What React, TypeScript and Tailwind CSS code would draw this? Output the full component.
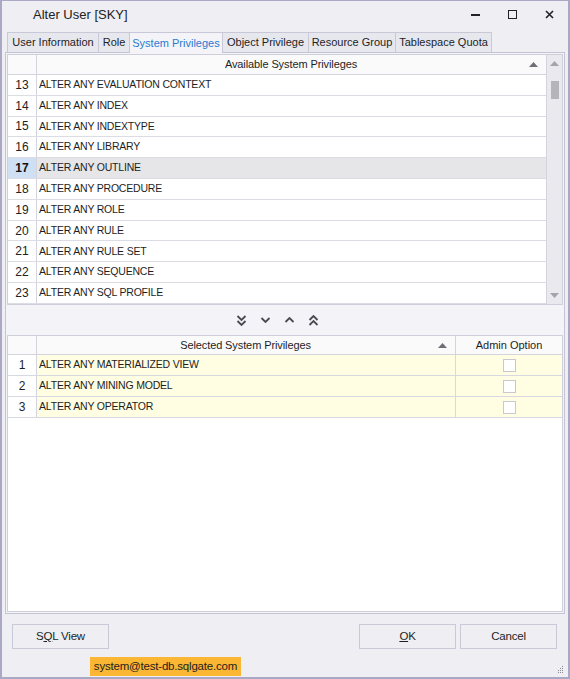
import type { ReactNode } from 'react'

const available = [
  'ALTER ANY EVALUATION CONTEXT',
  'ALTER ANY INDEX',
  'ALTER ANY INDEXTYPE',
  'ALTER ANY LIBRARY',
  'ALTER ANY OUTLINE',
  'ALTER ANY PROCEDURE',
  'ALTER ANY ROLE',
  'ALTER ANY RULE',
  'ALTER ANY RULE SET',
  'ALTER ANY SEQUENCE',
  'ALTER ANY SQL PROFILE',
]

const selected = ['ALTER ANY MATERIALIZED VIEW', 'ALTER ANY MINING MODEL', 'ALTER ANY OPERATOR']

const tabs = [
  { label: 'User Information', w: 'w-[92px]' },
  { label: 'Role', w: 'w-[32px]' },
  { label: 'System Privileges', w: 'w-[94px]', active: true },
  { label: 'Object Privilege', w: 'w-[87px]' },
  { label: 'Resource Group', w: 'w-[88px]' },
  { label: 'Tablespace Quota', w: 'w-[97px]' },
]

function SortUp() {
  return (
    <svg width="9" height="5" viewBox="0 0 9 5" className="shrink-0">
      <path d="M0 5 L4.5 0 L9 5 Z" fill="#6e6e76" />
    </svg>
  )
}

function Chevron({ up, double }: { up?: boolean; double?: boolean }) {
  const h = double ? 11 : 6
  return (
    <svg width="11" height={h} viewBox={`0 0 11 ${h}`} className={up ? 'rotate-180' : ''}>
      <path d="M1.5 1 L5.5 5 L9.5 1" fill="none" stroke="#4a4a52" strokeWidth="1.8" />
      {double && <path d="M1.5 6 L5.5 10 L9.5 6" fill="none" stroke="#4a4a52" strokeWidth="1.8" />}
    </svg>
  )
}

function Button({ children }: { children: ReactNode }) {
  return (
    <div className="flex h-[25px] w-[97px] items-center justify-center border border-[#c9c9d8] bg-[#eeeef3] text-[11.5px] tracking-[-0.2px] text-[#1e1e1e]">
      {children}
    </div>
  )
}

export default function App() {
  return (
    <div className="flex h-[679px] w-[570px] flex-col border-2 border-t border-[#a9a9c6] bg-[#eeeef3] font-[family-name:'Liberation_Sans',Arial,sans-serif] text-[11px] text-[#1e1e1e]">
      {/* title bar */}
      <div className="flex h-[31px] items-center pb-[4px] pl-[31px] pr-[14px]">
        <span className="text-[13px] text-[#222]">Alter User [SKY]</span>
        <div className="ml-auto flex items-center gap-[28px]">
          <div className="h-[2px] w-[9px] bg-[#222]" />
          <div className="h-[9px] w-[9px] border-[1.5px] border-[#222]" />
          <svg width="9" height="9" viewBox="0 0 9 9">
            <path d="M1 1 L8 8 M8 1 L1 8" stroke="#222" strokeWidth="1.6" />
          </svg>
        </div>
      </div>

      {/* tabs */}
      <div className="relative z-10 flex h-[20px] pl-[5px]">
        {tabs.map((t) => (
          <div
            key={t.label}
            className={`-mr-px flex items-center justify-center border border-b-0 border-[#c8c8d8] ${t.w} ${
              t.active ? 'bg-[#f4f4f8] text-[#2a7bd0] h-[21px]' : 'bg-[#e7e7ee] text-[#1e1e1e] h-[20px]'
            }`}
          >
            {t.label}
          </div>
        ))}
      </div>

      {/* panel */}
      <div className="mx-[3px] flex h-[562px] flex-col border border-[#c4c4d4] bg-[#f4f4f8] p-px">
        {/* available grid */}
        <div className="flex h-[251px] border border-[#cfcfdb] bg-white">
          <div className="flex flex-1 flex-col">
            <div className="flex h-[20px] border-b border-[#d4d4df] bg-[#fafafa]">
              <div className="w-[29px] border-r border-[#d4d4df]" />
              <div className="flex flex-1 items-center pl-[16px] pr-[8px]">
                <span className="flex-1 text-center tracking-[-0.1px]">Available System Privileges</span>
                <SortUp />
              </div>
            </div>
            {available.map((name, i) => {
              const n = i + 13
              const sel = n === 17
              return (
                <div key={name} className={`flex h-[21px] border-b border-[#dcdce5] ${sel ? 'bg-[#e6e6e8]' : ''}`}>
                  <div
                    className={`flex w-[29px] items-center justify-center border-r border-[#d4d4df] text-[12px] ${
                      sel ? 'bg-[#cfe0f4] font-bold text-[#111]' : 'bg-white text-[#222]'
                    }`}
                  >
                    {n}
                  </div>
                  <div className="flex flex-1 items-center pl-[2px] text-[10.5px] tracking-[-0.2px]">{name}</div>
                </div>
              )
            })}
          </div>
          {/* scrollbar */}
          <div className="flex w-[16px] flex-col items-center border-l border-[#d4d4df] bg-[#e9e9ee]">
            <svg width="9" height="5" viewBox="0 0 9 5" className="mt-[6px]">
              <path d="M0 5 L4.5 0 L9 5 Z" fill="#a4a4ac" />
            </svg>
            <div className="mt-[15px] h-[18px] w-[8px] bg-[#b4b4ba]" />
            <svg width="9" height="5" viewBox="0 0 9 5" className="mb-[6px] mt-auto">
              <path d="M0 0 L4.5 5 L9 0 Z" fill="#a4a4ac" />
            </svg>
          </div>
        </div>

        {/* move buttons */}
        <div className="flex h-[30px] items-center justify-center gap-[13px] pr-[16px]">
          <Chevron double />
          <Chevron />
          <Chevron up />
          <Chevron up double />
        </div>

        {/* selected grid */}
        <div className="flex flex-1 flex-col border border-[#cfcfdb] bg-white">
          <div className="flex h-[19px] border-b border-[#d4d4df] bg-[#fafafa]">
            <div className="w-[29px] border-r border-[#d4d4df]" />
            <div className="flex w-[419px] items-center border-r border-[#d4d4df] pl-[16px] pr-[8px]">
              <span className="flex-1 text-center tracking-[-0.1px]">Selected System Privileges</span>
              <SortUp />
            </div>
            <div className="flex flex-1 items-center justify-center">Admin Option</div>
          </div>
          {selected.map((name, i) => (
            <div key={name} className="flex h-[21px] border-b border-[#d8d8e2]">
              <div className="flex w-[29px] items-center justify-center border-r border-[#d4d4df] bg-white text-[12px]">
                {i + 1}
              </div>
              <div className="flex w-[419px] items-center border-r border-[#d8d8e2] bg-[#fffde2] pl-[2px] text-[10.5px] tracking-[-0.2px]">
                {name}
              </div>
              <div className="flex flex-1 items-center justify-center bg-[#fffde2]">
                <div className="h-[13px] w-[13px] border border-[#c8c8d2] bg-white" />
              </div>
            </div>
          ))}
        </div>
      </div>

      {/* footer */}
      <div className="mt-[10px] flex px-[10px] pr-[11px]">
        <Button>
          S<span className="underline">Q</span>L View
        </Button>
        <div className="ml-auto flex gap-[4px]">
          <Button>
            <span className="underline">O</span>K
          </Button>
          <Button>Cancel</Button>
        </div>
      </div>
      <div className="relative mt-[8px] flex h-[19px] items-end">
        <div className="ml-[88px] flex h-[19px] w-[151px] items-center justify-center whitespace-nowrap bg-[#fbb634] text-[11.5px] tracking-[-0.2px] text-[#1e1e1e]">
          system@test-db.sqlgate.com
        </div>
        <svg width="7" height="7" viewBox="0 0 7 7" className="absolute bottom-[3px] right-[4px]">
          <g fill="#8a8a94">
            <rect x="5" y="0" width="1" height="1" />
            <rect x="3" y="2" width="1" height="1" />
            <rect x="5" y="2" width="1" height="1" />
            <rect x="1" y="4" width="1" height="1" />
            <rect x="3" y="4" width="1" height="1" />
            <rect x="5" y="4" width="1" height="1" />
            <rect x="1" y="6" width="1" height="1" />
            <rect x="3" y="6" width="1" height="1" />
            <rect x="5" y="6" width="1" height="1" />
          </g>
        </svg>
      </div>
    </div>
  )
}
